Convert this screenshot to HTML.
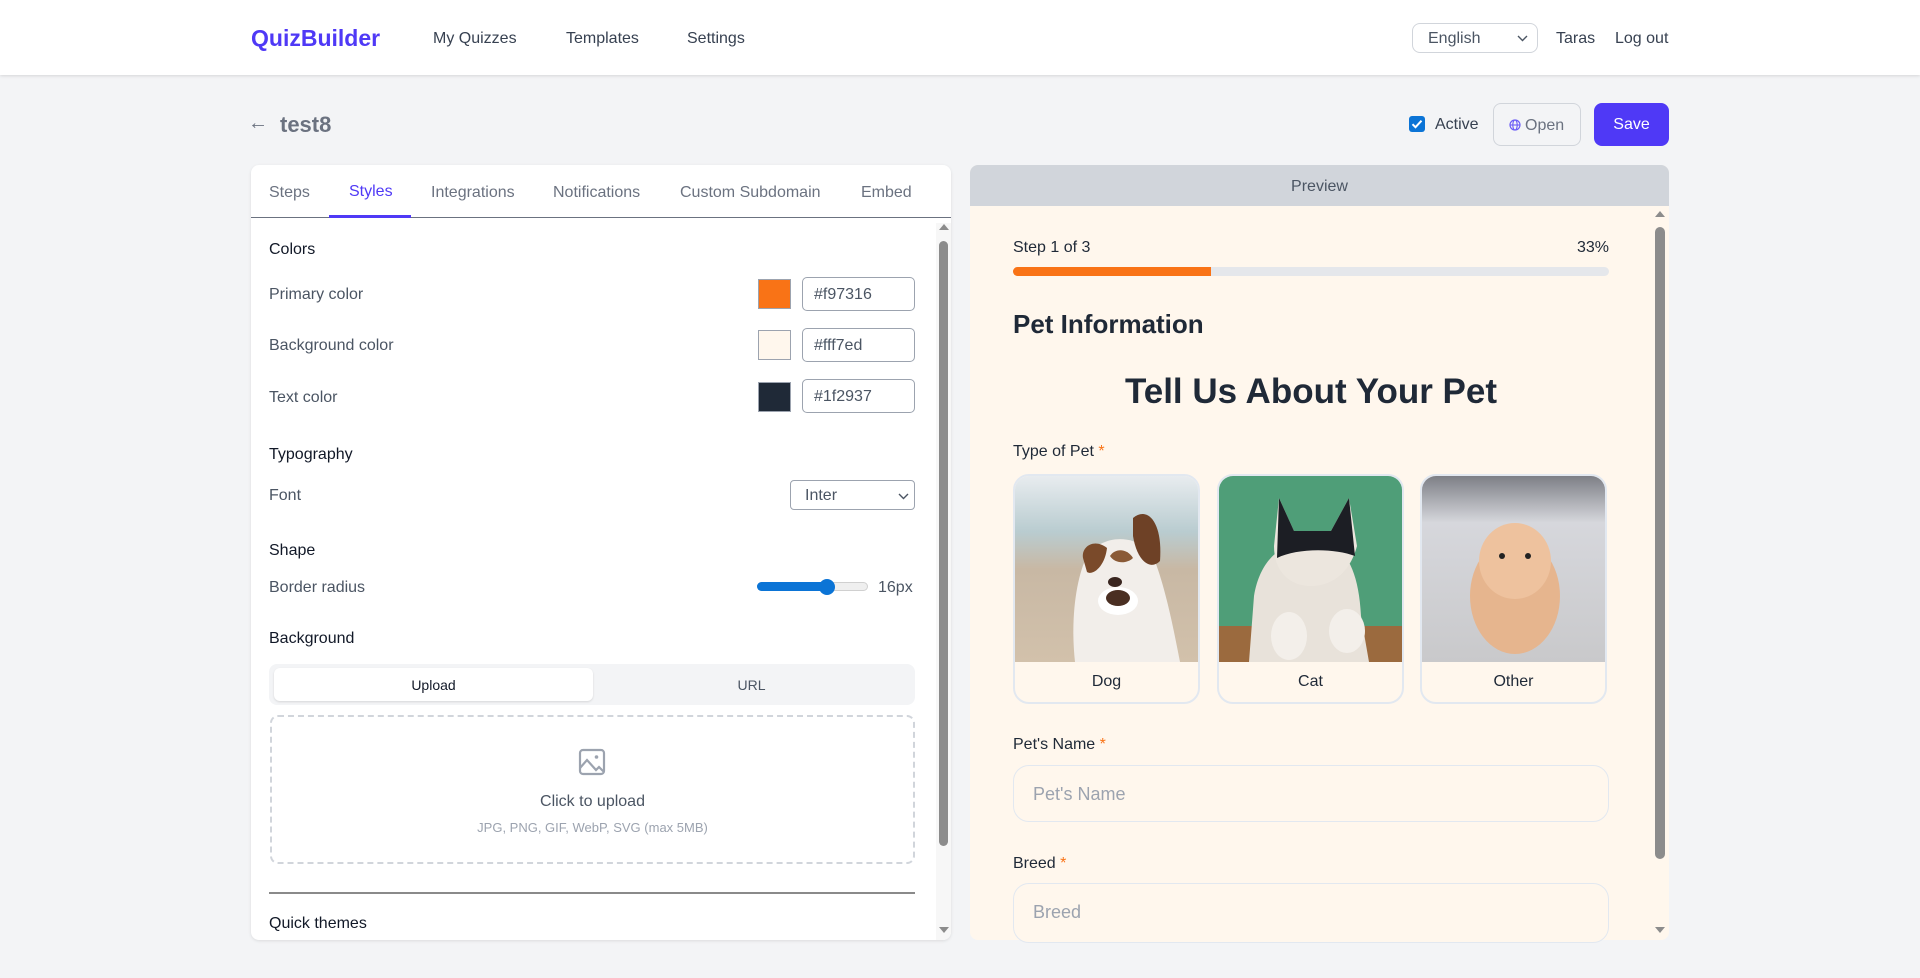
<!DOCTYPE html>
<html><head><meta charset="utf-8"><style>
*{box-sizing:border-box;margin:0;padding:0}
body{width:1920px;height:978px;background:#f3f4f6;font-family:"Liberation Sans",Arial,sans-serif;position:relative;overflow:hidden;color:#1f2937}
.a{position:absolute;white-space:nowrap}
.hdr{position:absolute;left:0;top:0;width:1920px;height:75px;background:#fff;box-shadow:0 1px 3px rgba(0,0,0,.12)}
.nav{font-size:16px;color:#374151;top:30px}
.lab{font-size:16px;color:#4b5563;left:269px}
.h{font-size:16px;color:#111827;left:269px}
.sw{position:absolute;left:758px;width:33px;height:30px;border:1px solid #9ca3af}
.inp{position:absolute;left:802px;width:113px;height:34px;border:1px solid #9ca3af;border-radius:5px;font-size:16px;color:#4b5563;padding:8px 0 0 11px}
.card{position:absolute;top:474px;width:187px;height:230px;border:2px solid #e2e8f0;border-radius:16px;overflow:hidden;background:#fff7ed}
.card svg{display:block}
.card .t{position:absolute;left:0;right:0;top:197px;text-align:center;font-size:16px;color:#1f2937}
.pin{position:absolute;left:1013px;width:596px;height:57px;border:1px solid #e2e8f0;border-radius:16px;background:#fff7ed;font-size:18px;color:#9ca3af;padding:18px 0 0 19px}
.req{color:#f97316}
</style></head><body>
<div class="hdr"></div>
<div class="a" style="left:251px;top:25px;font-size:23px;font-weight:bold;color:#4f39f6">QuizBuilder</div>
<div class="a nav" style="left:433px">My Quizzes</div>
<div class="a nav" style="left:566px">Templates</div>
<div class="a nav" style="left:687px">Settings</div>
<div class="a" style="left:1412px;top:23px;width:126px;height:30px;border:1px solid #d1d5db;border-radius:8px;font-size:16px;color:#4b5563;padding:6px 0 0 15px">English<svg style="position:absolute;right:9px;top:11px" width="11" height="7" viewBox="0 0 11 7"><path d="M1 1l4.5 4.5L10 1" fill="none" stroke="#4b5563" stroke-width="1.4"/></svg></div>
<div class="a nav" style="left:1556px">Taras</div>
<div class="a nav" style="left:1615px">Log out</div>

<div class="a" style="left:248px;top:112px;font-size:20px;color:#6b7280">←</div>
<div class="a" style="left:280px;top:112px;font-size:22px;font-weight:bold;color:#6b7280">test8</div>
<div class="a" style="left:1409px;top:116px;width:16px;height:16px;background:#0b74d6;border-radius:3px"><svg width="16" height="16" viewBox="0 0 16 16"><path d="M3.5 8.2l3 3 6-6.5" fill="none" stroke="#fff" stroke-width="2"/></svg></div>
<div class="a" style="left:1435px;top:116px;font-size:16px;color:#374151">Active</div>
<div class="a" style="left:1493px;top:103px;width:88px;height:43px;border:1px solid #d1d5db;border-radius:8px;background:#f3f4f6;font-size:16px;color:#6b7280;padding:13px 0 0 15px"><svg width="12" height="12" viewBox="0 0 12 12" style="vertical-align:-1px;margin-right:4px"><circle cx="6" cy="6" r="5" fill="none" stroke="#6b5cf6" stroke-width="1.2"/><ellipse cx="6" cy="6" rx="2.2" ry="5" fill="none" stroke="#6b5cf6" stroke-width="1.1"/><path d="M1 6h10" stroke="#6b5cf6" stroke-width="1.1"/></svg>Open</div>
<div class="a" style="left:1594px;top:103px;width:75px;height:43px;border-radius:8px;background:#4f39f6;color:#fff;font-size:16px;text-align:center;padding-top:13px">Save</div>

<!-- left panel -->
<div class="a" style="left:251px;top:165px;width:700px;height:775px;background:#fff;border-radius:8px;box-shadow:0 1px 3px rgba(0,0,0,.1);overflow:hidden">
 <div class="a" style="left:0;top:52px;width:700px;height:1px;background:#6b7280"></div>
 <div class="a" style="left:78px;top:50px;width:82px;height:3px;background:#4f39f6"></div>
 <div class="a" style="left:685px;top:58px;width:15px;height:717px;background:#f7f7f7"></div>
 <div class="a" style="left:688px;top:76px;width:9px;height:605px;background:#8c8c8c;border-radius:5px"></div>
 <svg class="a" style="left:687px;top:57px" width="12" height="10"><path d="M1 8h10L6 2z" fill="#8c8c8c"/></svg>
 <svg class="a" style="left:687px;top:760px" width="12" height="10"><path d="M1 2h10L6 8z" fill="#8c8c8c"/></svg>
</div>
<div class="a" style="left:269px;top:184px;font-size:16px;color:#6b7280">Steps</div>
<div class="a" style="left:349px;top:183px;font-size:16px;color:#4f39f6">Styles</div>
<div class="a" style="left:431px;top:184px;font-size:16px;color:#6b7280">Integrations</div>
<div class="a" style="left:553px;top:184px;font-size:16px;color:#6b7280">Notifications</div>
<div class="a" style="left:680px;top:184px;font-size:16px;color:#6b7280">Custom Subdomain</div>
<div class="a" style="left:861px;top:184px;font-size:16px;color:#6b7280">Embed</div>

<div class="a h" style="top:241px">Colors</div>
<div class="a lab" style="top:286px">Primary color</div>
<div class="sw" style="top:279px;background:#f97316"></div><div class="inp" style="top:277px">#f97316</div>
<div class="a lab" style="top:337px">Background color</div>
<div class="sw" style="top:330px;background:#fff7ed"></div><div class="inp" style="top:328px">#fff7ed</div>
<div class="a lab" style="top:389px">Text color</div>
<div class="sw" style="top:382px;background:#1f2937"></div><div class="inp" style="top:379px">#1f2937</div>
<div class="a h" style="top:446px">Typography</div>
<div class="a lab" style="top:487px">Font</div>
<div class="a" style="left:790px;top:480px;width:125px;height:30px;border:1px solid #9ca3af;border-radius:4px;font-size:16px;color:#4b5563;padding:6px 0 0 14px">Inter<svg style="position:absolute;right:5px;top:12px" width="11" height="7" viewBox="0 0 11 7"><path d="M1 1l4.5 4.5L10 1" fill="none" stroke="#4b5563" stroke-width="1.4"/></svg></div>
<div class="a h" style="top:542px">Shape</div>
<div class="a lab" style="top:579px">Border radius</div>
<div class="a" style="left:757px;top:582px;width:111px;height:9px;border-radius:5px;background:#efefef;border:1px solid #d0d0d0"></div>
<div class="a" style="left:757px;top:582px;width:72px;height:9px;border-radius:5px;background:#0b74d6"></div>
<div class="a" style="left:819px;top:579px;width:16px;height:16px;border-radius:50%;background:#0b74d6"></div>
<div class="a" style="left:878px;top:579px;font-size:16px;color:#4b5563">16px</div>
<div class="a h" style="top:630px">Background</div>
<div class="a" style="left:269px;top:664px;width:646px;height:41px;background:#f3f4f6;border-radius:8px"></div>
<div class="a" style="left:274px;top:668px;width:319px;height:33px;background:#fff;border-radius:6px;box-shadow:0 1px 2px rgba(0,0,0,.12);font-size:14px;text-align:center;padding-top:9px;color:#111827">Upload</div>
<div class="a" style="left:593px;top:668px;width:317px;height:33px;font-size:14px;text-align:center;padding-top:9px;color:#4b5563">URL</div>
<div class="a" style="left:270px;top:715px;width:645px;height:149px;border:2px dashed #d1d5db;border-radius:8px"></div>
<svg class="a" style="left:577px;top:747px" width="30" height="30" viewBox="0 0 30 30"><rect x="3" y="3" width="24" height="24" rx="3" fill="none" stroke="#9ca3af" stroke-width="2.2"/><circle cx="19.5" cy="10" r="1.8" fill="#9ca3af"/><path d="M3 21l7-8 9 10 3-3 5 5" fill="none" stroke="#9ca3af" stroke-width="2.2"/></svg>
<div class="a" style="left:270px;width:645px;top:793px;text-align:center;font-size:16px;color:#4b5563">Click to upload</div>
<div class="a" style="left:270px;width:645px;top:820px;text-align:center;font-size:13px;color:#9ca3af">JPG, PNG, GIF, WebP, SVG (max 5MB)</div>
<div class="a" style="left:269px;top:892px;width:646px;height:2px;background:#8a8a8a"></div>
<div class="a h" style="top:915px">Quick themes</div>

<!-- right panel -->
<div class="a" style="left:970px;top:165px;width:699px;height:775px;background:#fff7ed;border-radius:8px;overflow:hidden">
 <div class="a" style="left:0;top:0;width:699px;height:41px;background:#d1d5db;text-align:center;font-size:16px;color:#4b5563;padding-top:13px">Preview</div>
 <div class="a" style="left:682px;top:41px;width:17px;height:734px;background:#fff7ed"></div>
 <div class="a" style="left:685px;top:62px;width:10px;height:632px;background:#8c8c8c;border-radius:5px"></div>
 <svg class="a" style="left:684px;top:44px" width="12" height="10"><path d="M1 8h10L6 2z" fill="#8c8c8c"/></svg>
 <svg class="a" style="left:684px;top:760px" width="12" height="10"><path d="M1 2h10L6 8z" fill="#8c8c8c"/></svg>
</div>
<div class="a" style="left:1013px;top:239px;font-size:16px;color:#1f2937">Step 1 of 3</div>
<div class="a" style="left:1577px;top:239px;font-size:16px;color:#1f2937">33%</div>
<div class="a" style="left:1013px;top:267px;width:596px;height:9px;border-radius:5px;background:#e5e7eb"></div>
<div class="a" style="left:1013px;top:267px;width:198px;height:9px;border-radius:5px 0 0 5px;background:#f97316"></div>
<div class="a" style="left:1013px;top:309px;font-size:26px;font-weight:bold;color:#1f2937">Pet Information</div>
<div class="a" style="left:1013px;width:596px;top:372px;text-align:center;font-size:35px;font-weight:bold;color:#1f2937">Tell Us About Your Pet</div>
<div class="a" style="left:1013px;top:443px;font-size:16px">Type of Pet <span class="req">*</span></div>

<div class="card" style="left:1013px"><svg width="187" height="186" viewBox="0 0 187 186">
<defs><linearGradient id="g1" x1="0" y1="0" x2="0" y2="1"><stop offset="0" stop-color="#e8ecef"/><stop offset=".3" stop-color="#b9ccd0"/><stop offset=".5" stop-color="#c8b8a4"/><stop offset="1" stop-color="#d2c1ab"/></linearGradient></defs>
<rect width="187" height="186" fill="url(#g1)"/>
<path d="M60 186 C55 140 62 100 72 80 C85 60 120 55 138 80 C150 110 158 150 165 186Z" fill="#f2eeea"/>
<path d="M68 82 C66 70 80 62 92 72 C90 90 78 100 72 96Z" fill="#7a4a2a"/>
<path d="M118 42 C132 30 148 45 145 85 C135 95 122 85 118 60Z" fill="#6e4126"/>
<path d="M95 80 C100 72 112 72 118 82 C112 88 100 88 95 80Z" fill="#8a5a36"/>
<ellipse cx="103" cy="125" rx="20" ry="14" fill="#fff"/><ellipse cx="103" cy="122" rx="12" ry="8" fill="#4a2f22"/><ellipse cx="100" cy="106" rx="7" ry="5" fill="#3a2620"/>
</svg><div class="t">Dog</div></div>

<div class="card" style="left:1217px"><svg width="187" height="186" viewBox="0 0 187 186">
<rect width="187" height="186" fill="#4f9e78"/>
<rect y="150" width="187" height="36" fill="#9b6a3e"/>
<path d="M30 186 L35 120 C40 90 55 75 70 70 L115 68 C130 80 140 100 142 140 L150 186Z" fill="#e8e2da"/>
<path d="M60 22 L75 55 L112 55 L130 22 L138 70 C130 100 110 110 92 110 C70 110 55 95 55 70Z" fill="#ece6de"/>
<path d="M60 22 L75 55 L112 55 L130 22 L136 80 C115 72 78 72 58 82Z" fill="#1c1e24"/>
<ellipse cx="70" cy="160" rx="18" ry="24" fill="#f3efea"/><ellipse cx="128" cy="155" rx="18" ry="22" fill="#f3efea"/>
</svg><div class="t">Cat</div></div>

<div class="card" style="left:1420px"><svg width="187" height="186" viewBox="0 0 187 186">
<defs><linearGradient id="g3" x1="0" y1="0" x2="0" y2="1"><stop offset="0" stop-color="#7d7f86"/><stop offset=".25" stop-color="#d6d7dc"/><stop offset="1" stop-color="#c9c9cb"/></linearGradient></defs>
<rect width="187" height="186" fill="url(#g3)"/>
<ellipse cx="93" cy="120" rx="45" ry="58" fill="#e6b58e"/>
<ellipse cx="93" cy="85" rx="36" ry="38" fill="#eec29e"/>
<circle cx="80" cy="80" r="3" fill="#222"/><circle cx="106" cy="80" r="3" fill="#222"/>
</svg><div class="t">Other</div></div>

<div class="a" style="left:1013px;top:736px;font-size:16px">Pet's Name <span class="req">*</span></div>
<div class="pin" style="top:765px">Pet's Name</div>
<div class="a" style="left:1013px;top:855px;font-size:16px">Breed <span class="req">*</span></div>
<div class="pin" style="top:883px;height:60px">Breed</div>
</body></html>
